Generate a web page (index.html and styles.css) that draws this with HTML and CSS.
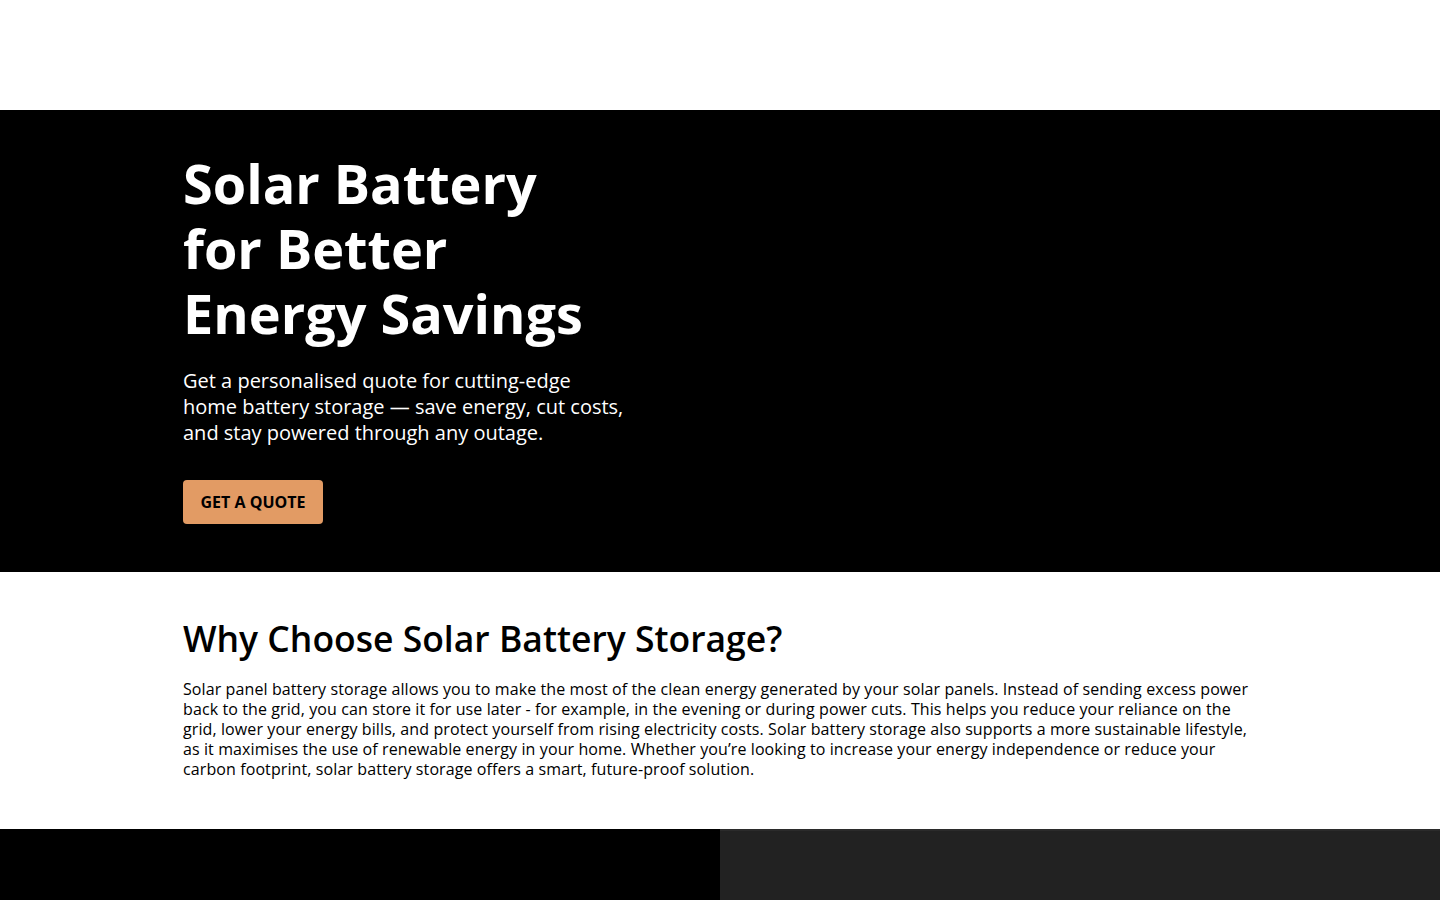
FILE: index.html
```html
<!DOCTYPE html>
<html lang="en">
<head>
<meta charset="utf-8">
<title>Solar Battery for Better Energy Savings</title>
<link rel="stylesheet" href="styles.css">
</head>
<body>
<header class="site-header"></header>
<section class="hero">
  <div class="container">
    <div class="hero-text">
      <h1 class="hero-title">Solar Battery for Better Energy Savings</h1>
      <p class="hero-lead">Get a personalised quote for cutting-edge home battery storage — save energy, cut costs, and stay powered through any outage.</p>
      <a class="btn-quote" href="#">GET A QUOTE</a>
    </div>
  </div>
</section>
<section class="why">
  <div class="container">
    <h2 class="why-title">Why Choose Solar Battery Storage?</h2>
    <p class="why-text">Solar panel battery storage allows you to make the most of the clean energy generated by your solar panels. Instead of sending excess power back to the grid, you can store it for use later - for example, in the evening or during power cuts. This helps you reduce your reliance on the grid, lower your energy bills, and protect yourself from rising electricity costs. Solar battery storage also supports a more sustainable lifestyle, as it maximises the use of renewable energy in your home. Whether you’re looking to increase your energy independence or reduce your carbon footprint, solar battery storage offers a smart, future-proof solution.</p>
  </div>
</section>
<section class="split">
  <div class="split-left"></div>
  <div class="split-right"></div>
</section>
</body>
</html>
```

FILE: styles.css
```css
* { box-sizing: border-box; }
html, body { margin: 0; padding: 0; }
body {
  font-family: "Open Sans", "Noto Sans", sans-serif;
  color: #000;
  background: #fff;
}
.container {
  width: 1074px;
  margin: 0 auto;
}
.site-header {
  height: 110px;
  background: #fff;
}
.hero {
  background: #000;
  color: #fff;
  padding: 41px 0 48px;
}
.hero-text {
  width: 442px;
}
.hero-title {
  margin: 0;
  max-width: 420px;
  font-size: 54px;
  line-height: 65px;
  font-weight: 700;
  letter-spacing: 0;
}
.hero-lead {
  margin: 22px 0 0;
  font-size: 20px;
  line-height: 26px;
  letter-spacing: 0;
}
.btn-quote {
  display: inline-flex;
  align-items: center;
  justify-content: center;
  margin-top: 34px;
  width: 140px;
  height: 44px;
  background: #e29b64;
  color: #000;
  border-radius: 4px;
  font-size: 16px;
  font-weight: 700;
  text-decoration: none;
}
.why {
  padding: 44px 0 50px;
}
.why-title {
  margin: 0;
  font-size: 35.5px;
  line-height: 44px;
  font-weight: 600;
  letter-spacing: 0;
}
.why-text {
  margin: 19px 0 0;
  font-size: 16px;
  line-height: 20px;
  letter-spacing: 0.1px;
}
.split {
  display: flex;
  height: 200px;
}
.split-left {
  flex: 1;
  background: #000;
}
.split-right {
  flex: 1;
  background: #222;
  border-top: 2px solid #2b2b2b;
}
```
